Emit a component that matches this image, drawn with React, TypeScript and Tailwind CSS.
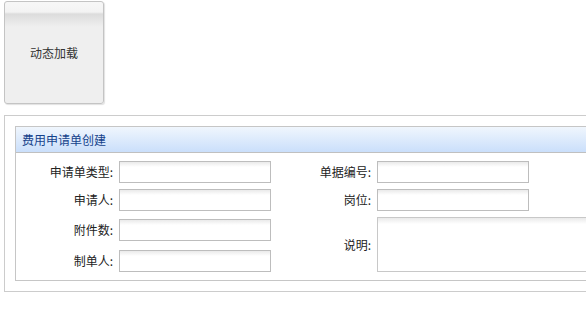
import React from "react";

const font = { fontFamily: '"Noto Sans CJK SC", "Noto Sans", sans-serif' };

function Field({ label, labelW }: { label: string; labelW: string }) {
  return (
    <div className="flex items-center h-[22px]">
      <span className={`${labelW} text-right text-[12px] text-[#222] pr-[6px] leading-none`}>{label}</span>
      <input
        className="w-[152px] h-[22px] border border-[#bdbdbd] bg-[linear-gradient(to_bottom,#eaeaea,#ffffff_5px)] outline-none"
        readOnly
      />
    </div>
  );
}

export default function App() {
  return (
    <div className="w-[586px] h-[321px] overflow-hidden bg-white" style={font}>
      <button className="ml-[4px] mt-[1px] w-[100px] h-[103px] rounded-[3px] border border-[#c4c4c4] shadow-[1px_1px_1px_rgba(0,0,0,0.12)] bg-[linear-gradient(to_bottom,#f7f7f7_0px,#f3f3f3_10px,#dcdcdc_12px,#efefef_25px,#efefef_100%)] text-[12px] text-[#333] flex items-center justify-center">
        动态加载
      </button>

      <div className="ml-[4px] mt-[11px] w-[640px] border border-[#cccccc] p-[10px]">
        <div className="border border-[#c6c6c6]">
          <div className="h-[26px] flex items-center pl-[6px] border-b border-[#c0c0c0] bg-[linear-gradient(to_bottom,#f0f6fd,#cadffb)] text-[12px] text-[#15428b]">
            费用申请单创建
          </div>
          <div className="flex pt-[8px] pb-[8px]">
            <div className="flex flex-col">
              <Field label="申请单类型:" labelW="w-[103px]" />
              <div className="mt-[6px]"><Field label="申请人:" labelW="w-[103px]" /></div>
              <div className="mt-[8px]"><Field label="附件数:" labelW="w-[103px]" /></div>
              <div className="mt-[9px]"><Field label="制单人:" labelW="w-[103px]" /></div>
            </div>
            <div className="flex flex-col">
              <Field label="单据编号:" labelW="w-[106px]" />
              <div className="mt-[6px]"><Field label="岗位:" labelW="w-[106px]" /></div>
              <div className="mt-[6px] flex items-center h-[55px]">
                <span className="w-[106px] text-right text-[12px] text-[#222] pr-[6px] leading-none">说明:</span>
                <textarea
                  readOnly
                  className="w-[240px] h-[55px] border border-[#c8c8c8] resize-none bg-[linear-gradient(to_bottom,#eaeaea,#ffffff_6px)] outline-none"
                />
              </div>
            </div>
          </div>
        </div>
      </div>
    </div>
  );
}
